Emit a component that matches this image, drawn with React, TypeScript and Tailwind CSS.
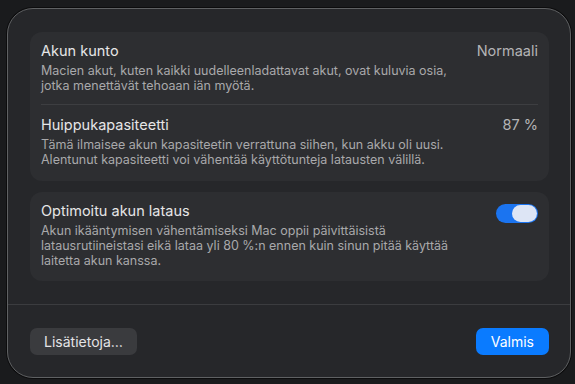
import React, { useState } from 'react';

const font = { fontFamily: '"Inter", "Liberation Sans", sans-serif' };

function Row({ title, value, children }: { title: string, value?: string, children: React.ReactNode }) {
  return (
    <div className="flex flex-row items-start justify-between">
      <div className="flex flex-col">
        <div className="text-[14.5px] leading-[18px] text-[#e6e6e7]">{title}</div>
        <div className="mt-[3px] text-[12.5px] leading-[15px] text-[#a9a9ab]">{children}</div>
      </div>
      {value && <div className="text-[14.5px] leading-[18px] text-[#b4b4b6]">{value}</div>}
    </div>
  );
}

function Toggle() {
  const [on, setOn] = useState(true);
  return (
    <button
      onClick={() => setOn(!on)}
      className={`mt-[2px] flex h-[19px] w-[42px] shrink-0 items-center rounded-full px-[1px] ${on ? 'justify-end bg-[#1b74f0]' : 'justify-start bg-[#3d3e41]'}`}
    >
      <span className="h-[17px] w-[25px] rounded-full bg-[#dde5f5]" />
    </button>
  );
}

export default function App() {
  return (
    <main style={font} className="h-[384px] w-[575px] overflow-hidden bg-[#1a1b1d] px-[7px] pt-[8px]">
      <div className="flex h-[370px] w-[564px] flex-col rounded-[26px] border border-[#5f6163] bg-[#26272a] shadow-[0_0_0_1px_#0c0c0d]">

        <div className="flex flex-col gap-[11px] pl-[22px] pr-[21px] pt-[23px]">
          <div className="flex flex-col rounded-[12px] bg-[#2d2e31] px-[11px] pt-[10px] pb-[14px]">
            <Row title="Akun kunto" value="Normaali">
              Macien akut, kuten kaikki uudelleenladattavat akut, ovat kuluvia osia,<br />
              jotka menettävät tehoaan iän myötä.
            </Row>
            <div className="my-[11px] h-px bg-[#3d3e41]" />
            <Row title="Huippukapasiteetti" value="87 %">
              Tämä ilmaisee akun kapasiteetin verrattuna siihen, kun akku oli uusi.<br />
              Alentunut kapasiteetti voi vähentää käyttötunteja latausten välillä.
            </Row>
          </div>

          <div className="flex flex-row items-start justify-between rounded-[12px] bg-[#2d2e31] px-[11px] pt-[10px] pb-[13px]">
            <div className="flex flex-col">
              <div className="text-[14.5px] leading-[18px] text-[#e6e6e7]">Optimoitu akun lataus</div>
              <div className="mt-[3px] text-[12.5px] leading-[15px] text-[#a9a9ab]">
                Akun ikääntymisen vähentämiseksi Mac oppii päivittäisistä<br />
                latausrutiineistasi eikä lataa yli 80 %:n ennen kuin sinun pitää käyttää<br />
                laitetta akun kanssa.
              </div>
            </div>
            <Toggle />
          </div>
        </div>

        <div className="mt-auto border-t border-[#3b3c3f] pl-[22px] pr-[21px] pt-[23px] pb-[22px]">
          <div className="flex flex-row items-center justify-between">
            <button className="h-[27px] rounded-[7px] bg-[#3a3b3e] px-[14px] text-[14px] text-[#e4e4e6]">
              Lisätietoja…
            </button>
            <button className="h-[27px] rounded-[7px] bg-[#0a7bff] px-[15px] text-[14px] text-white">
              Valmis
            </button>
          </div>
        </div>
      </div>
    </main>
  );
}
